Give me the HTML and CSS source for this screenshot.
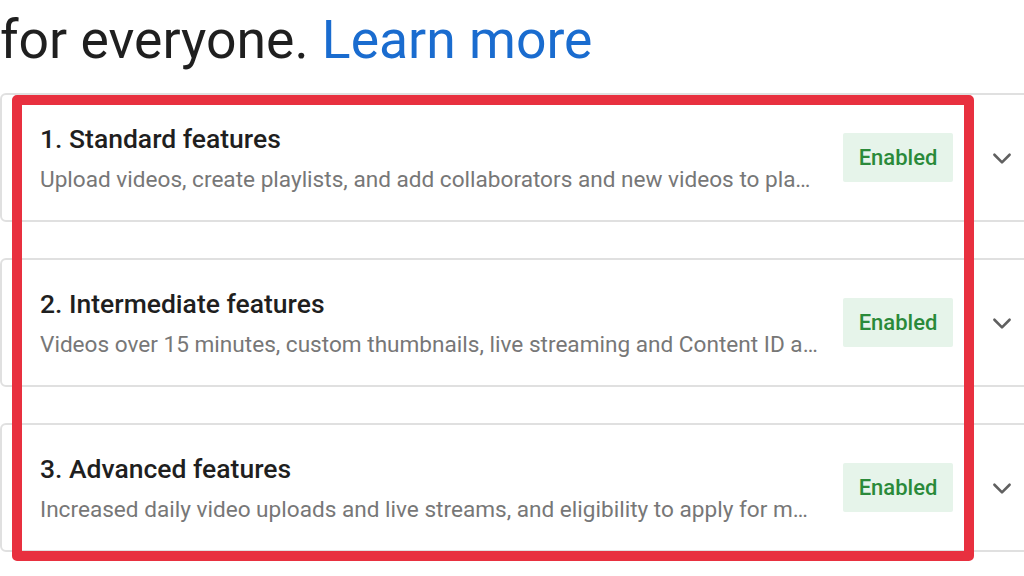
FILE: index.html
```html
<!DOCTYPE html>
<html lang="en">
<head>
<meta charset="utf-8">
<title>Features</title>
<link rel="stylesheet" href="styles.css">
</head>
<body>
<div class="page">
  <p class="intro">for everyone. <a class="link" href="#">Learn more</a></p>
  <div class="list">
    <div class="card">
      <div class="info">
        <div class="title">1. Standard features</div>
        <div class="desc">Upload videos, create playlists, and add collaborators and new videos to playlists</div>
      </div>
      <span class="badge">Enabled</span>
      <span class="chev"><svg width="26" height="26" viewBox="0 0 24 24"><path d="M5 9l7 7 7-7" fill="none" stroke="#606060" stroke-width="2.4" stroke-linecap="round" stroke-linejoin="round"/></svg></span>
    </div>
    <div class="card">
      <div class="info">
        <div class="title">2. Intermediate features</div>
        <div class="desc">Videos over 15 minutes, custom thumbnails, live streaming and Content ID appeals</div>
      </div>
      <span class="badge">Enabled</span>
      <span class="chev"><svg width="26" height="26" viewBox="0 0 24 24"><path d="M5 9l7 7 7-7" fill="none" stroke="#606060" stroke-width="2.4" stroke-linecap="round" stroke-linejoin="round"/></svg></span>
    </div>
    <div class="card">
      <div class="info">
        <div class="title">3. Advanced features</div>
        <div class="desc">Increased daily video uploads and live streams, and eligibility to apply for monetization</div>
      </div>
      <span class="badge">Enabled</span>
      <span class="chev"><svg width="26" height="26" viewBox="0 0 24 24"><path d="M5 9l7 7 7-7" fill="none" stroke="#606060" stroke-width="2.4" stroke-linecap="round" stroke-linejoin="round"/></svg></span>
    </div>
    <div class="highlight"></div>
  </div>
</div>
</body>
</html>
```
FILE: styles.css
```css
html, body {
  margin: 0;
  padding: 0;
  background: #ffffff;
  overflow: hidden;
}
.page {
  width: 1024px;
  height: 576px;
  overflow: hidden;
  font-family: Roboto, "Liberation Sans", Arial, sans-serif;
}
.intro {
  margin: 0;
  height: 93px;
  padding-top: 4px;
  box-sizing: border-box;
  font-size: 53.5px;
  line-height: 72px;
  color: #1f1f1f;
  white-space: nowrap;
}
.link {
  color: #1a6ccf;
  text-decoration: none;
}
.list {
  position: relative;
  display: flex;
  flex-direction: column;
  gap: 36px;
  width: 1040px;
}
.card {
  display: flex;
  align-items: center;
  height: 129px;
  box-sizing: border-box;
  border: 2px solid #e0e0e0;
  border-radius: 6px;
  padding-left: 38px;
}
.info {
  width: 780px;
  min-width: 0;
  margin-top: 2px;
}
.title {
  font-size: 26.5px;
  font-weight: 500;
  color: #1f1f1f;
  line-height: 30px;
  white-space: nowrap;
}
.desc {
  font-size: 22.6px;
  color: #777777;
  line-height: 28px;
  margin-top: 12px;
  white-space: nowrap;
  overflow: hidden;
  text-overflow: ellipsis;
}
.badge {
  margin-left: 23px;
  width: 110px;
  height: 49px;
  flex: none;
  display: flex;
  align-items: center;
  justify-content: center;
  background: #e6f4ea;
  color: #2a8a3a;
  font-size: 22px;
  font-weight: 500;
  border-radius: 2px;
}
.chev {
  margin-left: 34px;
  width: 30px;
  height: 30px;
  flex: none;
  display: flex;
  align-items: center;
  justify-content: center;
}
.highlight {
  position: absolute;
  left: 12px;
  top: 2px;
  width: 962px;
  height: 466px;
  box-sizing: border-box;
  border: 10px solid #e8303f;
  border-radius: 5px;
  pointer-events: none;
}
```
